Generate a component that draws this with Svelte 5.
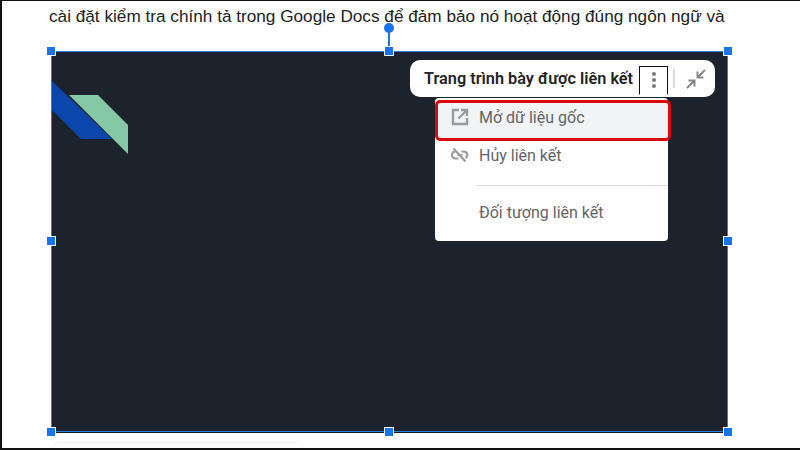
<script>
	const handles = [
		[51, 50], [389, 50], [728, 50],
		[51, 240], [728, 240],
		[51, 431], [389, 431], [728, 431]
	];
</script>

<div class="page">
	<p class="line">cài đặt kiểm tra chính tả trong Google Docs để đảm bảo nó hoạt động đúng ngôn ngữ và</p>

	<div class="slide">
		<svg class="logo" viewBox="0 0 78 76" width="78" height="76" aria-hidden="true">
			<path d="M0 0L60 58H29L0 29z" fill="#0a46ab" />
			<path d="M17 14H46L76 44V73z" fill="#85c8a5" />
		</svg>

		<div class="toolbar">
			<span class="title">Trang trình bày được liên kết</span>
			<span class="more">
				<i></i><i></i><i></i>
			</span>
			<span class="sep"></span>
			<svg class="collapse" viewBox="0 0 20 20" width="20" height="20" fill="none" stroke="#85878a" stroke-width="2" aria-hidden="true">
				<path d="M19 1L11.500 8.500M11.500 2.500V8.500H17.500" />
				<path d="M1 19L8.500 11.500M2.500 11.500H8.500V17.500" />
			</svg>
		</div>

		<div class="menu">
			<div class="item active">
				<svg viewBox="0 0 18 18" width="18" height="18" fill="none" stroke="#9a9b9e" stroke-width="2.400" aria-hidden="true">
					<path d="M8 2H2V16H16V10" />
					<path d="M10 2H16V8M16 2L7.500 10.500" />
				</svg>
				<span>Mở dữ liệu gốc</span>
			</div>
			<div class="item">
				<svg viewBox="0 0 18 18" width="18" height="18" fill="none" stroke="#9a9b9e" stroke-width="2.200" aria-hidden="true">
					<path d="M4.500 5.500A3.500 3.500 0 0 0 4.500 12.500H7.500" />
					<path d="M10.500 5.500H12.500A3.500 3.500 0 0 1 14.500 12" />
					<path d="M6.500 9H11.500M2.500 2.500L14.500 15.500" />
				</svg>
				<span>Hủy liên kết</span>
			</div>
			<div class="rule"></div>
			<div class="item plain">
				<span>Đối tượng liên kết</span>
			</div>
		</div>
	</div>

	<div class="stem"></div>
	<div class="knob"></div>
	{#each handles as [x, y]}
		<span class="handle" style="left: {x}px; top: {y}px"></span>
	{/each}

	<div class="below"></div>
</div>

<style>
	:global(body) {
		margin: 0;
		background: #fff;
	}

	.page {
		position: relative;
		box-sizing: border-box;
		width: 800px;
		height: 450px;
		overflow: hidden;
		border: solid #111;
		border-width: 1px 0 2px 2px;
		background: #fff;
		font-family: "Liberation Sans", Arial, sans-serif;
	}

	.line {
		margin: 0;
		padding: 5px 0 0 47px;
		font-size: 17.200px;
		line-height: 20px;
		color: #222;
		white-space: nowrap;
	}

	/* the selected slide sits on the page as a free object */
	.slide {
		position: absolute;
		left: 49px;
		top: 50px;
		box-sizing: border-box;
		width: 677px;
		height: 381px;
		border: 1px solid #2a7de1;
		background: #1c232d;
		box-shadow: 0 1px 0 #10161d;
	}

	.logo {
		position: absolute;
		left: 0;
		top: 29px;
	}

	.toolbar {
		position: absolute;
		left: 358px;
		top: 8px;
		box-sizing: border-box;
		display: flex;
		align-items: center;
		width: 305px;
		height: 37px;
		padding: 0 9px 0 14px;
		border-radius: 10px;
		background: #fff;
	}

	.title {
		font-family: Roboto, sans-serif;
		font-size: 16.300px;
		font-weight: 600;
		color: #232323;
		white-space: nowrap;
	}

	.more {
		box-sizing: border-box;
		display: flex;
		flex-direction: column;
		align-items: center;
		justify-content: center;
		gap: 2px;
		width: 29px;
		height: 29px;
		margin: 4px 0 0 6px;
		padding-bottom: 2px;
		border: 1px solid #111;
		border-bottom-color: transparent;
	}

	.more i {
		width: 4px;
		height: 4px;
		border-radius: 50%;
		background: #77797c;
	}

	.sep {
		width: 2px;
		height: 19px;
		margin: 0 11px 0 5px;
		background: #dcdcdc;
	}

	.menu {
		position: absolute;
		left: 383px;
		top: 46px;
		width: 233px;
		height: 143px;
		padding-top: 2px;
		box-sizing: border-box;
		border-radius: 4px;
		background: #fff;
		font-family: Roboto, sans-serif;
		font-size: 16px;
		color: #636467;
	}

	.item {
		display: flex;
		align-items: center;
		gap: 10px;
		height: 28px;
		padding-left: 16px;
		white-space: nowrap;
	}

	.item.active {
		box-sizing: border-box;
		width: 236px;
		height: 41px;
		padding-left: 13px;
		padding-bottom: 7px;
		border: 3px solid #d9090f;
		border-radius: 5px;
		background: #f1f3f4;
	}

	.item.plain {
		height: 36px;
		padding-left: 44px;
	}

	.rule {
		height: 1px;
		margin: 16px 0 8px 41px;
		background: #dadada;
	}

	.stem {
		position: absolute;
		left: 386px;
		top: 30px;
		width: 2px;
		height: 20px;
		background: #1f74e3;
	}

	.knob {
		position: absolute;
		left: 382px;
		top: 22px;
		width: 10px;
		height: 10px;
		border-radius: 50%;
		background: #1a73e8;
	}

	.handle {
		position: absolute;
		box-sizing: border-box;
		width: 10px;
		height: 10px;
		margin: -5px 0 0 -7px;
		border: 1px solid #fff;
		background: #1a73e8;
	}

	.below {
		position: absolute;
		left: 50px;
		top: 441px;
		width: 252px;
		height: 20px;
		box-sizing: border-box;
		border: 1px solid #f1f1f1;
		border-radius: 8px;
	}
</style>
